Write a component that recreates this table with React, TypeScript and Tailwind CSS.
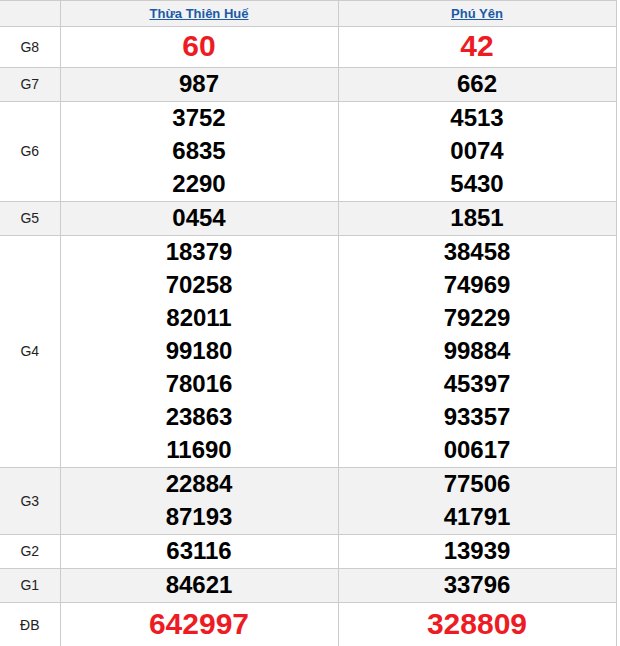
const rows: { label: string; a: string[]; b: string[]; big?: boolean }[] = [
  { label: "G8", a: ["60"], b: ["42"], big: true },
  { label: "G7", a: ["987"], b: ["662"] },
  { label: "G6", a: ["3752", "6835", "2290"], b: ["4513", "0074", "5430"] },
  { label: "G5", a: ["0454"], b: ["1851"] },
  {
    label: "G4",
    a: ["18379", "70258", "82011", "99180", "78016", "23863", "11690"],
    b: ["38458", "74969", "79229", "99884", "45397", "93357", "00617"],
  },
  { label: "G3", a: ["22884", "87193"], b: ["77506", "41791"] },
  { label: "G2", a: ["63116"], b: ["13939"] },
  { label: "G1", a: ["84621"], b: ["33796"] },
  { label: "ĐB", a: ["642997"], b: ["328809"], big: true },
];

const Numbers = ({ items, big, last }: { items: string[]; big?: boolean; last?: boolean }) => (
  <td className="border-r border-b border-[#cccccc] text-center p-0 align-middle">
    {items.map((n) => (
      <div
        key={n}
        className={
          big
            ? `text-[30px] font-bold text-[#ed1c24] pb-[2px] ${last ? "leading-[42px]" : "leading-[38px]"}`
            : "text-[24px] font-bold text-black leading-[31px] pb-[2px]"
        }
      >
        {n}
      </div>
    ))}
  </td>
);

export default function App() {
  return (
    <div className="bg-white w-[620px] h-[646px] overflow-hidden" style={{ fontFamily: '"Liberation Sans", Arial, sans-serif' }}>
      <table className="w-[616px] border-collapse table-fixed border-t border-[#cccccc]">
        <colgroup>
          <col className="w-[60px]" />
          <col className="w-[278px]" />
          <col className="w-[278px]" />
        </colgroup>
        <thead>
          <tr className="bg-[#f2f2f2] h-[26px]">
            <th className="border-r border-b border-[#cccccc] p-0"></th>
            <th className="border-r border-b border-[#cccccc] p-0 text-[13px] font-bold">
              <a className="text-[#1a5aa8] underline">Thừa Thiên Huế</a>
            </th>
            <th className="border-r border-b border-[#cccccc] p-0 text-[13px] font-bold">
              <a className="text-[#1a5aa8] underline">Phú Yên</a>
            </th>
          </tr>
        </thead>
        <tbody>
          {rows.map((r, i) => (
            <tr key={r.label} className={i % 2 === 1 ? "bg-[#f2f2f2]" : "bg-white"}>
              <td className="border-r border-b border-[#cccccc] text-center text-[14px] text-[#222] p-0">{r.label}</td>
              <Numbers items={r.a} big={r.big} last={i === rows.length - 1} />
              <Numbers items={r.b} big={r.big} last={i === rows.length - 1} />
            </tr>
          ))}
        </tbody>
      </table>
    </div>
  );
}
